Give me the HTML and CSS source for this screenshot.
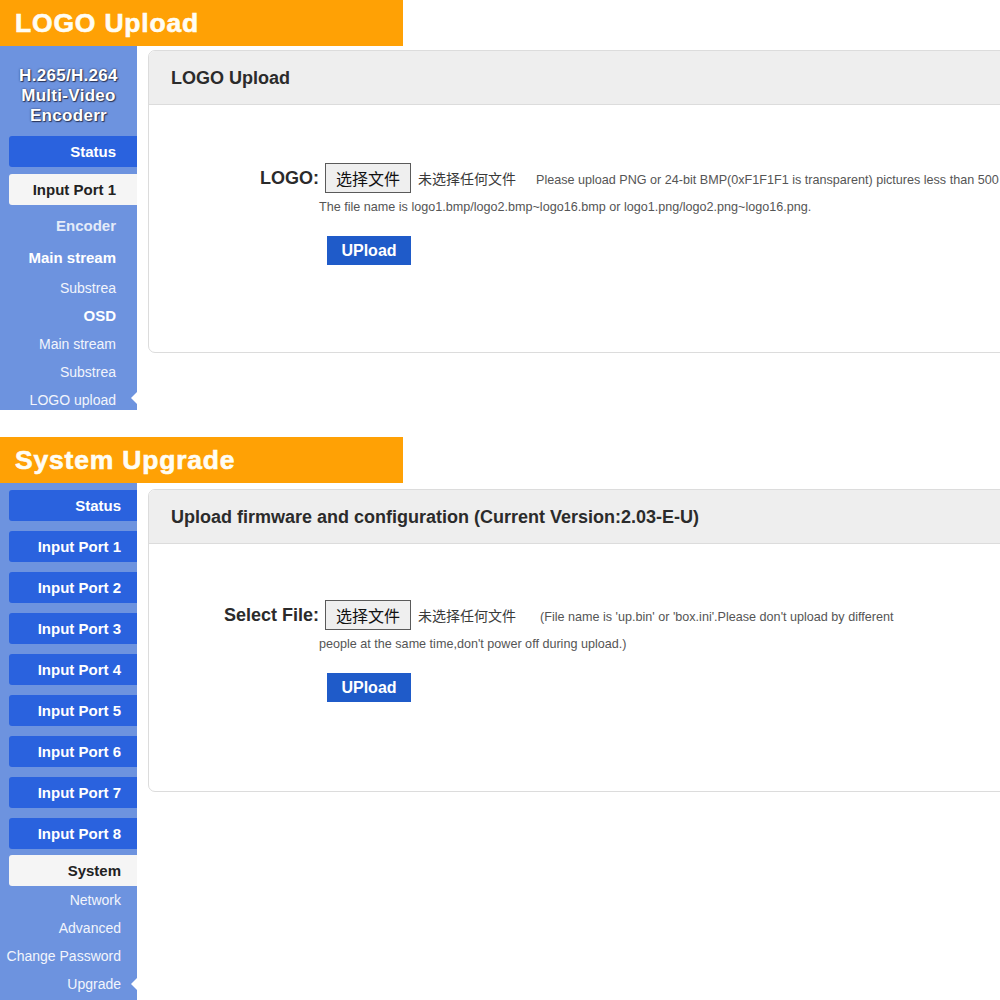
FILE: index.html
```html
<!DOCTYPE html>
<html>
<head>
<meta charset="utf-8">
<link rel="stylesheet" href="styles.css">
</head>
<body>
<section class="screen screen-logo">
  <div class="banner">LOGO Upload</div>
  <div class="layout">
    <nav class="sidebar">
      <div class="brand">H.265/H.264<br>Multi-Video<br>Encoderr</div>
      <div class="btn blue">Status</div>
      <div class="btn active">Input Port 1</div>
      <div class="sub group enc">Encoder</div>
      <div class="sub group main">Main stream</div>
      <div class="sub">Substrea</div>
      <div class="sub group">OSD</div>
      <div class="sub">Main stream</div>
      <div class="sub">Substrea</div>
      <div class="sub current last">LOGO upload</div>
    </nav>
    <div class="panel">
      <div class="panel-head">LOGO Upload</div>
      <div class="panel-body">
        <div class="form">
          <div class="label">LOGO:</div>
          <div class="field">
            <div class="file-row">
              <span class="file-btn">选择文件</span>
              <span class="file-none">未选择任何文件</span>
              <span class="note first">Please upload PNG or 24-bit BMP(0xF1F1F1 is transparent) pictures less than 500 KB.</span>
            </div>
            <div class="note line">The file name is logo1.bmp/logo2.bmp~logo16.bmp or logo1.png/logo2.png~logo16.png.</div>
            <div class="upload">UPload</div>
          </div>
        </div>
      </div>
    </div>
  </div>
</section>

<section class="screen screen-upgrade">
  <div class="banner">System Upgrade</div>
  <div class="layout">
    <nav class="sidebar sidebar2">
      <div class="btn blue">Status</div>
      <div class="btn blue">Input Port 1</div>
      <div class="btn blue">Input Port 2</div>
      <div class="btn blue">Input Port 3</div>
      <div class="btn blue">Input Port 4</div>
      <div class="btn blue">Input Port 5</div>
      <div class="btn blue">Input Port 6</div>
      <div class="btn blue">Input Port 7</div>
      <div class="btn blue p8">Input Port 8</div>
      <div class="btn active">System</div>
      <div class="sub">Network</div>
      <div class="sub">Advanced</div>
      <div class="sub">Change Password</div>
      <div class="sub current">Upgrade</div>
    </nav>
    <div class="panel">
      <div class="panel-head">Upload firmware and configuration (Current Version:2.03-E-U)</div>
      <div class="panel-body body2">
        <div class="form">
          <div class="label">Select File:</div>
          <div class="field">
            <div class="file-row">
              <span class="file-btn">选择文件</span>
              <span class="file-none">未选择任何文件</span>
              <span class="note first">(File name is 'up.bin' or 'box.ini'.Please don't upload by different</span>
            </div>
            <div class="note line">people at the same time,don't power off during upload.)</div>
            <div class="upload">UPload</div>
          </div>
        </div>
      </div>
    </div>
  </div>
</section>
</body>
</html>
```

FILE: styles.css
```css
html, body {
  margin: 0;
  padding: 0;
  background: #ffffff;
  overflow: hidden;
  width: 1000px;
  height: 1000px;
}
body {
  font-family: "Liberation Sans", Arial, "Noto Sans CJK SC", sans-serif;
  color: #333;
}
.screen {
  display: flex;
  flex-direction: column;
  width: 1100px;
}
.screen-logo {
  height: 437px;
}
.banner {
  width: 388px;
  height: 46px;
  padding-left: 15px;
  background: #ffa105;
  color: #fffdf4;
  font-size: 26.5px;
  font-weight: 700;
  letter-spacing: 0.8px;
  line-height: 46px;
  -webkit-text-stroke: 0.6px #fffdf4;
}
.layout {
  display: flex;
  align-items: flex-start;
}
.sidebar {
  width: 137px;
  flex: none;
  background: #6d93df;
  display: flex;
  flex-direction: column;
  padding-left: 9px;
  box-sizing: border-box;
  height: 364px;
  overflow: hidden;
}
.sidebar2 {
  height: 517px;
  padding-top: 7px;
}
.brand {
  margin-left: -9px;
  padding-top: 20px;
  height: 70px;
  margin-bottom: 0;
  text-align: center;
  color: #ffffff;
  font-size: 17px;
  font-weight: 700;
  letter-spacing: 0.3px;
  line-height: 20px;
  text-shadow: 1px 1px 1px #2a3558, 0 0 2px #2a3558;
}
.btn {
  height: 31px;
  line-height: 31px;
  text-align: right;
  padding-right: 21px;
  font-size: 15px;
  font-weight: 700;
  border-radius: 3px 0 0 3px;
  white-space: nowrap;
}
.blue {
  background: #2a62de;
  color: #ffffff;
}
.screen-logo .btn.blue {
  margin-top: 2px;
  margin-bottom: 7px;
}
.active {
  background: #f5f5f5;
  color: #222;
}
.screen-logo .active {
  margin-bottom: 5px;
}
.sidebar2 .btn {
  padding-right: 16px;
  margin-bottom: 10px;
}
.sidebar2 .btn.p8 {
  margin-bottom: 6px;
}
.sidebar2 .btn.active {
  margin-bottom: 0;
}
.sub {
  position: relative;
  margin-left: -9px;
  height: 28px;
  line-height: 28px;
  text-align: right;
  padding-right: 21px;
  font-size: 14px;
  color: #f2f5fc;
  white-space: nowrap;
}
.sidebar2 .sub {
  padding-right: 16px;
}
.group {
  font-size: 15px;
  font-weight: 700;
  color: #ffffff;
}
.enc {
  color: #e4ebf9;
  height: 32px;
  line-height: 32px;
}
.main {
  height: 32px;
  line-height: 32px;
}
.sub.last {
  height: 24px;
  line-height: 28px;
}
.current::after {
  content: "";
  position: absolute;
  right: 0;
  top: 50%;
  margin-top: -6px;
  border-right: 6px solid #ffffff;
  border-top: 6px solid transparent;
  border-bottom: 6px solid transparent;
}
.panel {
  margin-left: 11px;
  margin-top: 4px;
  width: 900px;
  flex: none;
  border: 1px solid #dcdcdc;
  border-radius: 7px;
  overflow: hidden;
  background: #fff;
}
.screen-upgrade .panel {
  margin-top: 6px;
}
.panel-head {
  height: 53px;
  line-height: 55px;
  background: #eeeeee;
  border-bottom: 1px solid #dcdcdc;
  padding-left: 22px;
  font-size: 18px;
  font-weight: 700;
  color: #2b2b2b;
  overflow: hidden;
}
.panel-body {
  height: 247px;
  padding-top: 58px;
  box-sizing: border-box;
}
.body2 {
  padding-top: 56px;
}
.form {
  display: grid;
  grid-template-columns: 170px 1fr;
}
.label {
  text-align: right;
  font-size: 18px;
  font-weight: 700;
  color: #2b2b2b;
  height: 30px;
  line-height: 30px;
}
.field {
  display: flex;
  flex-direction: column;
  align-items: flex-start;
}
.file-row {
  display: flex;
  align-items: center;
  height: 30px;
  white-space: nowrap;
}
.file-btn {
  margin-left: 6px;
  box-sizing: border-box;
  width: 86px;
  height: 30px;
  line-height: 28px;
  border: 1px solid #5a5a5a;
  background: #efefef;
  text-align: center;
  font-family: "Noto Sans CJK SC", sans-serif;
  font-size: 16px;
  color: #111;
}
.file-none {
  margin-left: 7px;
  font-family: "Noto Sans CJK SC", sans-serif;
  font-size: 14px;
  color: #3a3a3a;
}
.note {
  font-size: 12.6px;
  color: #555;
}
.note.first {
  margin-left: 20px;
  padding-top: 4px;
}
.screen-upgrade .note.first {
  margin-left: 24px;
}
.note.line {
  height: 29px;
  line-height: 29px;
  white-space: nowrap;
}
.upload {
  margin-top: 14px;
  margin-left: 8px;
  width: 84px;
  height: 29px;
  line-height: 29px;
  text-align: center;
  background: #1f5bc9;
  color: #ffffff;
  font-size: 16px;
  font-weight: 700;
}
```
